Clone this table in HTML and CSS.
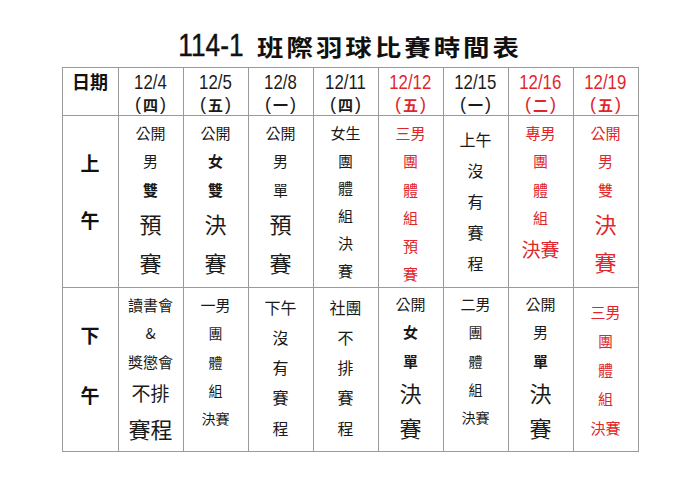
FILE: index.html
```html
<!DOCTYPE html>
<html lang="zh-Hant">
<head>
<meta charset="utf-8">
<title>114-1 班際羽球比賽時間表</title>
<link rel="stylesheet" href="styles.css">
</head>
<body>
<h1 class="title"><span class="title-num">114-1</span><span class="title-cjk">班際羽球比賽時間表</span></h1>
<div class="sheet">
  <div class="hd"><div class="hd-label">日期</div></div>
  <div class="hd"><div class="date">12/4</div><div class="dow"><span class="p">(</span><b>四</b><span class="p">)</span></div></div>
  <div class="hd"><div class="date">12/5</div><div class="dow"><span class="p">(</span><b>五</b><span class="p">)</span></div></div>
  <div class="hd"><div class="date">12/8</div><div class="dow"><span class="p">(</span><b>一</b><span class="p">)</span></div></div>
  <div class="hd"><div class="date">12/11</div><div class="dow"><span class="p">(</span><b>四</b><span class="p">)</span></div></div>
  <div class="hd red"><div class="date">12/12</div><div class="dow"><span class="p">(</span><b>五</b><span class="p">)</span></div></div>
  <div class="hd"><div class="date">12/15</div><div class="dow"><span class="p">(</span><b>一</b><span class="p">)</span></div></div>
  <div class="hd red"><div class="date">12/16</div><div class="dow"><span class="p">(</span><b>二</b><span class="p">)</span></div></div>
  <div class="hd red"><div class="date">12/19</div><div class="dow"><span class="p">(</span><b>五</b><span class="p">)</span></div></div>

  <div class="cell label am-label"><div>上</div><div>午</div></div>
  <div class="cell am"><div>公開</div><div>男</div><div class="b">雙</div><div class="lg l40">預</div><div class="lg l40">賽</div></div>
  <div class="cell am"><div>公開</div><div class="b">女</div><div class="b">雙</div><div class="lg l40">決</div><div class="lg l40">賽</div></div>
  <div class="cell am"><div>公開</div><div>男</div><div>單</div><div class="lg l40">預</div><div class="lg l40">賽</div></div>
  <div class="cell am tight"><div>女生</div><div>團</div><div>體</div><div>組</div><div>決</div><div>賽</div></div>
  <div class="cell am red"><div>三男</div><div>團</div><div>體</div><div>組</div><div>預</div><div>賽</div></div>
  <div class="cell mid big"><div>上午</div><div>沒</div><div>有</div><div>賽</div><div>程</div></div>
  <div class="cell am red"><div>專男</div><div>團</div><div>體</div><div>組</div><div class="md l34">決賽</div></div>
  <div class="cell am red"><div>公開</div><div>男</div><div>雙</div><div class="lg l38">決</div><div class="lg l38">賽</div></div>

  <div class="cell label pm-label"><div>下</div><div>午</div></div>
  <div class="cell pm"><div>讀書會</div><div>&amp;</div><div>獎懲會</div><div class="md l34">不排</div><div class="lg l36">賽程</div></div>
  <div class="cell pm"><div>一男</div><div class="sm">團</div><div class="sm">體</div><div class="sm">組</div><div class="sm">決賽</div></div>
  <div class="cell pm big pm-big"><div>下午</div><div>沒</div><div>有</div><div>賽</div><div>程</div></div>
  <div class="cell pm big pm-big"><div>社團</div><div>不</div><div>排</div><div>賽</div><div>程</div></div>
  <div class="cell pm pm-up"><div>公開</div><div class="b">女</div><div class="b">單</div><div class="lg l35">決</div><div class="lg l35">賽</div></div>
  <div class="cell pm pm-up"><div>二男</div><div class="sm">團</div><div class="sm">體</div><div class="sm">組</div><div class="sm">決賽</div></div>
  <div class="cell pm pm-up"><div>公開</div><div>男</div><div class="b">單</div><div class="lg l35">決</div><div class="lg l35">賽</div></div>
  <div class="cell mid red pm-mid"><div>三男</div><div>團</div><div>體</div><div>組</div><div>決賽</div></div>
</div>
</body>
</html>
```

FILE: styles.css
```css
html, body {
  margin: 0;
  padding: 0;
  background: #ffffff;
}

body {
  padding-top: 26px;
  font-family: "Noto Sans CJK TC", "Noto Sans CJK JP", sans-serif;
  color: #1a1a1a;
}

.title {
  margin: 0 0 2px;
  height: 39px;
  line-height: 39px;
  display: flex;
  justify-content: center;
  align-items: baseline;
  gap: 13px;
  font-weight: bold;
  white-space: nowrap;
  color: #111;
}

.title-num {
  font-family: "Liberation Sans", sans-serif;
  font-weight: normal;
  font-size: 32px;
  transform: scaleX(0.82);
  transform-origin: right center;
  margin-left: -15px;
  -webkit-text-stroke: 0.4px #111;
}

.title-cjk {
  font-family: "Noto Sans CJK TC", sans-serif;
  font-size: 23px;
  letter-spacing: 2.6px;
  transform: scaleX(1.15);
  transform-origin: left center;
  margin-right: 34px;
}

.sheet {
  width: 577px;
  margin: 0 auto;
  box-sizing: border-box;
  display: grid;
  grid-template-columns: 55px repeat(8, 64px);
  grid-template-rows: 47px 171px 163px;
  gap: 1px;
  padding: 1px;
  background: #9a9a9a;
}

.hd, .cell {
  background: #ffffff;
  display: flex;
  flex-direction: column;
  align-items: center;
  white-space: nowrap;
}

.hd {
  padding-top: 2px;
  line-height: 23px;
}

.hd-label {
  font-size: 18px;
  font-weight: bold;
  color: #111;
}

.date {
  font-family: "Liberation Sans", sans-serif;
  font-size: 21px;
  transform: scaleX(0.8);
}

.dow {
  font-size: 15px;
  display: flex;
  align-items: center;
}

.dow .p {
  font-family: "Liberation Sans", sans-serif;
  font-size: 18px;
  padding: 0 2px;
}

.dow b {
  font-weight: bold;
  font-size: 15px;
}

.red {
  color: #e0262c;
}

.cell {
  font-size: 15px;
  line-height: 28.3px;
}

.am {
  padding-top: 3px;
}

.pm {
  padding-top: 3px;
}

.pm-up {
  padding-top: 2px;
}

.tight {
  line-height: 27.5px;
}

.mid {
  justify-content: center;
}

.big {
  font-size: 16px;
  line-height: 31px;
}

.pm-big {
  line-height: 30.3px;
  padding-top: 3.5px;
}

.pm-mid {
  line-height: 29px;
}

.sm {
  font-size: 14px;
}

.b {
  font-weight: bold;
}

.md {
  font-size: 19px;
}

.lg {
  font-size: 22px;
}

.l34 { line-height: 34px; }
.l35 { line-height: 35px; }
.l36 { line-height: 36px; }
.l38 { line-height: 38px; }
.l40 { line-height: 39px; }

.label {
  font-size: 19px;
  font-weight: bold;
  color: #111;
}

.am-label {
  padding-top: 18px;
  line-height: 57px;
}

.pm-label {
  padding-top: 17px;
  line-height: 60px;
}
```
